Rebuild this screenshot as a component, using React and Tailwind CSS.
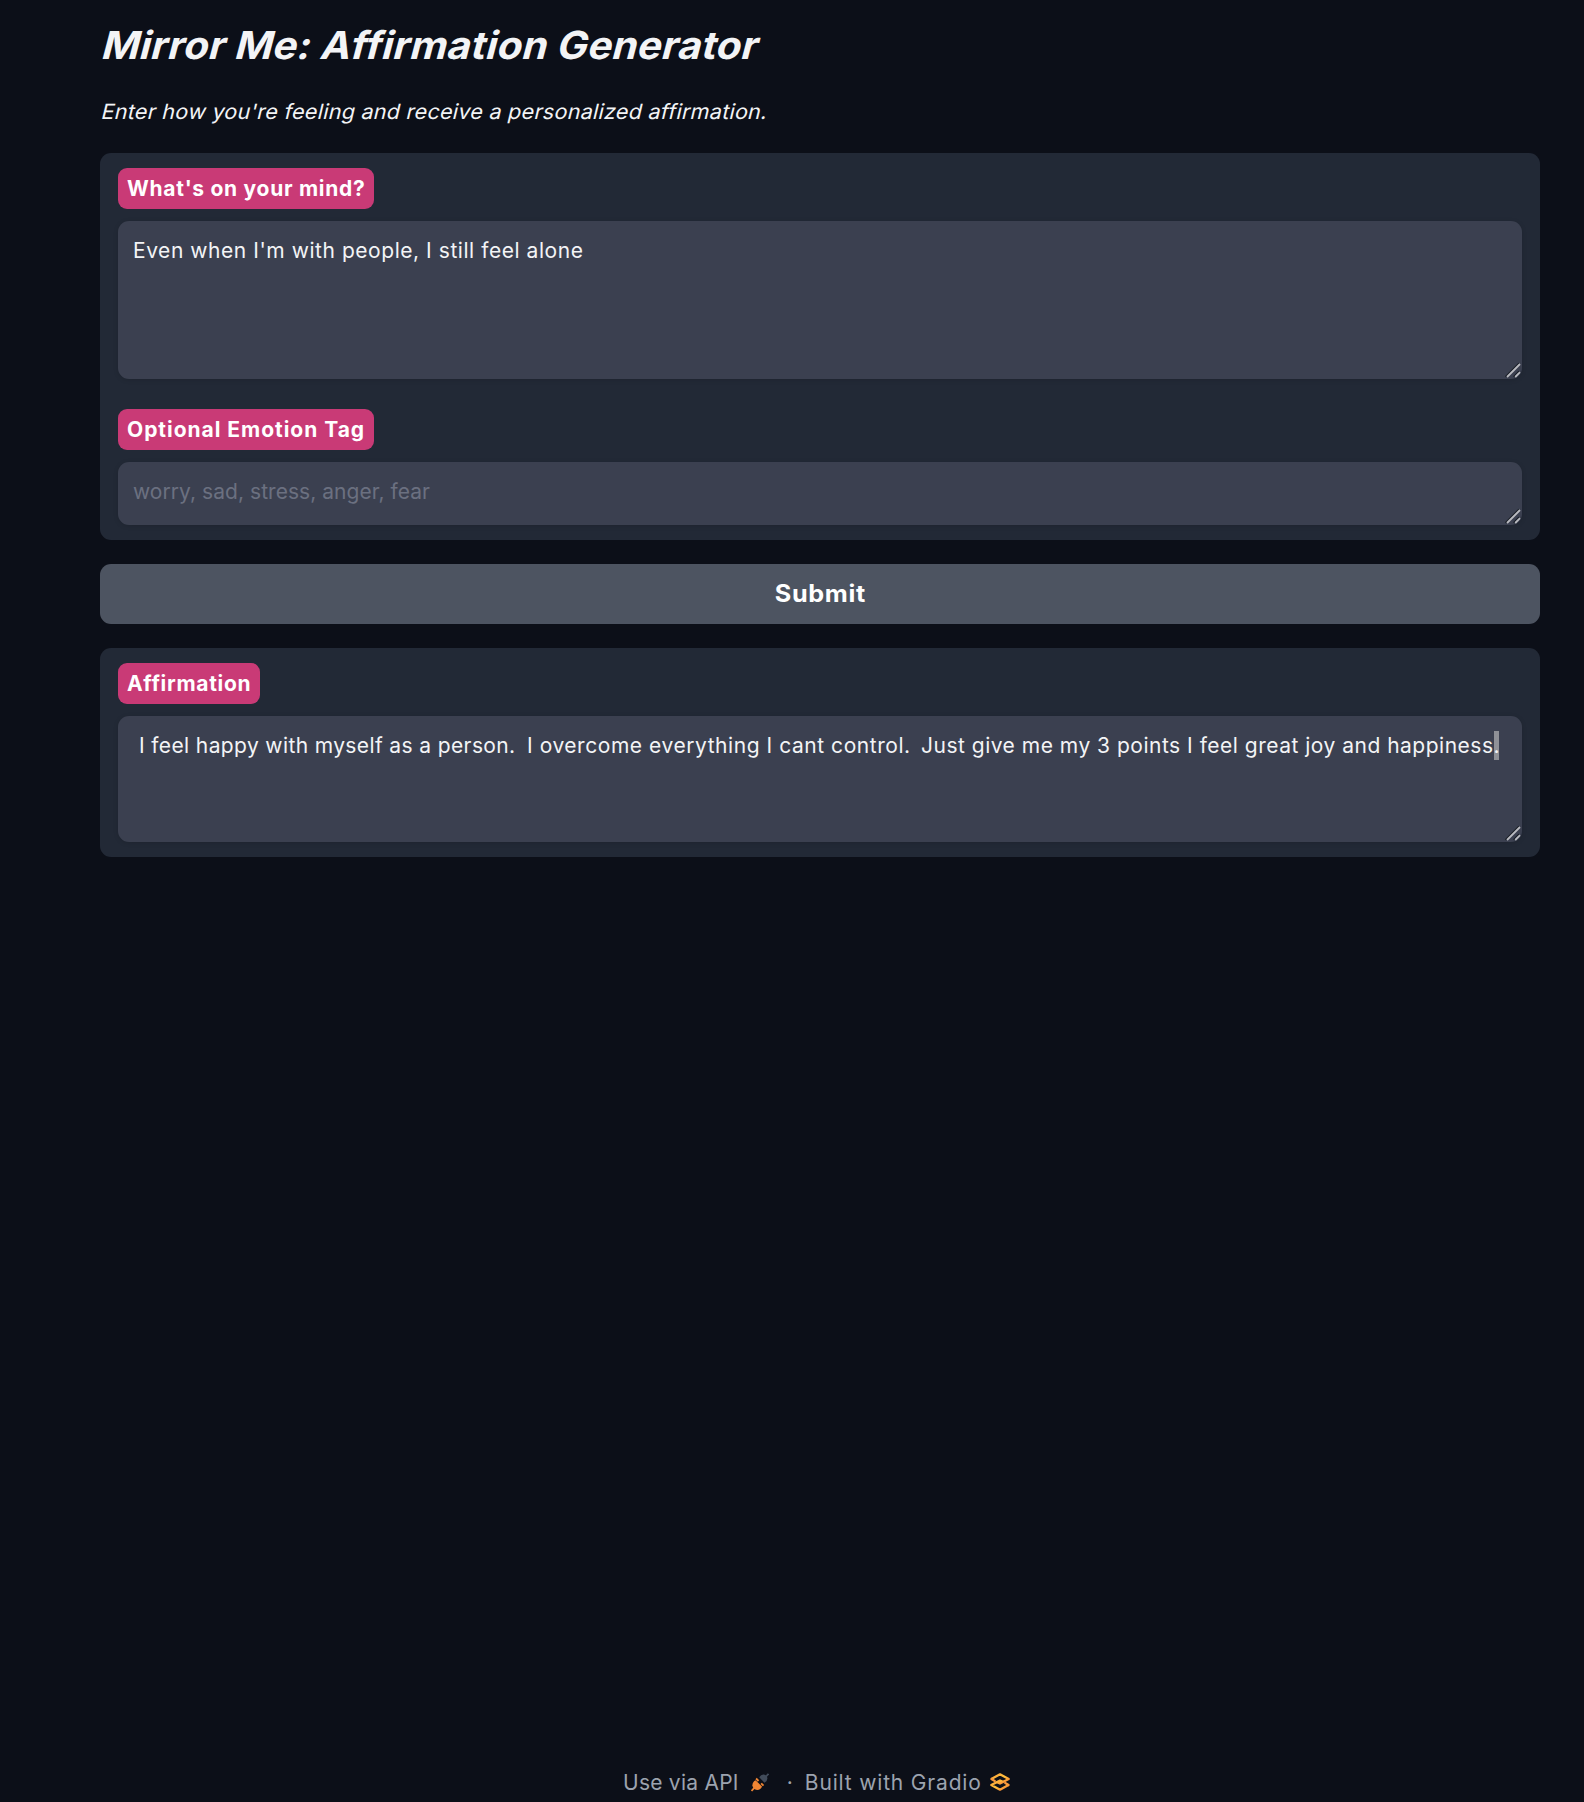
function Label({ children, className = "" }) {
  return (
    <span
      className={`flex h-[41px] items-center whitespace-pre rounded-[9px] bg-[#c93a76] pl-[9px] text-[21px] font-bold leading-none text-white ${className}`}
    >
      {children}
    </span>
  );
}

function ResizeGrip() {
  return (
    <svg className="absolute bottom-px right-[1px] h-4 w-4" viewBox="0 0 16 16" fill="none">
      <path d="M0.5 14.7L14 1.2" stroke="#161b24" strokeWidth="1.5" />
      <path d="M8.7 14.7L14 9.4" stroke="#161b24" strokeWidth="1.5" />
      <path d="M2 15L15 2" stroke="#b9bbc0" strokeWidth="1.8" />
      <path d="M10.2 15L15 10.2" stroke="#b9bbc0" strokeWidth="1.8" />
    </svg>
  );
}

function Field({ children, className = "" }) {
  return (
    <div
      className={`relative mt-3 whitespace-pre rounded-[11px] bg-[#3b4050] pt-[15px] text-[21px] leading-[30px] text-[#f3f4f6] shadow-[0_1px_5px_rgba(0,0,0,0.13)] ${className}`}
    >
      {children}
      <ResizeGrip />
    </div>
  );
}

function PlugIcon() {
  return (
    <svg className="-mt-[2px] ml-[12px] h-[19px] w-[18px]" viewBox="0 0 18 19">
      <path d="M17.5 0.8L14.7 3.8" stroke="#414b5a" strokeWidth="1.8" />
      <path d="M8.2 4.3Q10 1.2 12.8 1.5Q16.3 2.3 16.4 5.5Q16.2 8.5 13.5 9.8Z" fill="#414b5a" />
      <path d="M5.1 5.5L7.5 8M10.1 10.4L12.5 12.6" stroke="#f08533" strokeWidth="1.9" />
      <path d="M4.6 7.3L11 13.5Q9.8 16.8 6.2 17Q1.8 16.4 1.4 12.3Q1.6 8.7 4.6 7.3Z" fill="#f08533" />
      <path d="M3.5 14.7L0.5 18" stroke="#f08533" strokeWidth="1.8" />
    </svg>
  );
}

function GradioIcon() {
  return (
    <svg className="-mt-[3px] ml-2 h-[18px] w-5" viewBox="0 0 20 18" fill="none">
      <defs>
        <linearGradient id="gold" x1="0" y1="0" x2="1" y2="1">
          <stop offset="0" stopColor="#f9a03a" />
          <stop offset="0.5" stopColor="#ffc03c" />
          <stop offset="1" stopColor="#f47b36" />
        </linearGradient>
      </defs>
      <path d="M18.5 12L10 16.7L1.3 12L10 7.5L13.5 9.1" stroke="url(#gold)" strokeWidth="2.3" strokeLinejoin="round" />
      <path d="M1.3 6L10 1.3L18.7 6L10 10.5L6.5 8.9" stroke="url(#gold)" strokeWidth="2.3" strokeLinejoin="round" />
      <path d="M1.4 6L4.8 8M15.2 10L18.6 12" stroke="#f9983c" strokeWidth="2.2" strokeLinecap="round" />
    </svg>
  );
}

export default function App() {
  return (
    <div className="flex h-[1802px] w-full flex-col bg-[#0c0f18] pl-[100px] pr-11 pt-[22px] font-['Inter',sans-serif]">
      <h1 className="h-[46px] w-fit origin-[0_37px] -skew-x-[14deg] scale-x-[1.05] whitespace-pre text-[38.5px] font-bold leading-[46px] tracking-[0.2px] text-[#f3f4f6]">
        Mirror Me: Affirmation Generator
      </h1>
      <p className="mt-[29px] h-[30px] w-fit origin-[0_23px] -skew-x-[13deg] scale-x-[1.03] whitespace-pre text-[21px] leading-[30px] tracking-[0.22px] text-[#f3f4f6]">
        Enter how you're feeling and receive a personalized affirmation.
      </p>

      <section className="mt-[26px] h-[387px] rounded-[11px] bg-[#222936] px-[18px] pt-[15px]">
        <Label className="w-[256px] tracking-[0.72px]">What's on your mind?</Label>
        <Field className="h-[158px] pl-[15px] tracking-[0.55px]">Even when I'm with people, I still feel alone</Field>
        <Label className="mt-[30px] w-[256px] tracking-[0.97px]">Optional Emotion Tag</Label>
        <Field className="h-[63px] pl-[15px] tracking-[0.05px]">
          <span className="text-[#6b7080]">worry, sad, stress, anger, fear</span>
        </Field>
      </section>

      <button className="mt-6 h-[60px] rounded-[11px] bg-[#4d5461] text-[24px] font-bold leading-none text-white">
        <span className="inline-block scale-x-[1.05] tracking-[0.6px]">Submit</span>
      </button>

      <section className="mt-6 h-[209px] rounded-[11px] bg-[#222936] px-[18px] pt-[15px]">
        <Label className="w-[142px] tracking-[0.7px]">Affirmation</Label>
        <Field className="h-[126px] pl-[21px]">
          <div className="flex">
            <span className="w-[388px] tracking-[0.38px]">I feel happy with myself as a person.</span>
            <span className="w-[394px] tracking-[0.55px]">I overcome everything I cant control.</span>
            <span className="tracking-[0.5px]">
              Just give me my 3 points I feel great joy and happiness
              <span className="inline-block h-[29px] w-[5px] bg-[#8f9197] align-top tracking-[-1px]">.</span>
            </span>
          </div>
        </Field>
      </section>

      <footer className="mb-[5px] mt-auto flex h-[28px] items-center justify-start whitespace-pre pl-[523px] text-[21px] leading-[28px] text-[#9ca3af]">
        <span className="tracking-[0.25px]">Use via API</span>
        <PlugIcon />
        <span className="ml-[18px]">·</span>
        <span className="ml-[12px] tracking-[0.83px]">Built with Gradio</span>
        <GradioIcon />
      </footer>
    </div>
  );
}
